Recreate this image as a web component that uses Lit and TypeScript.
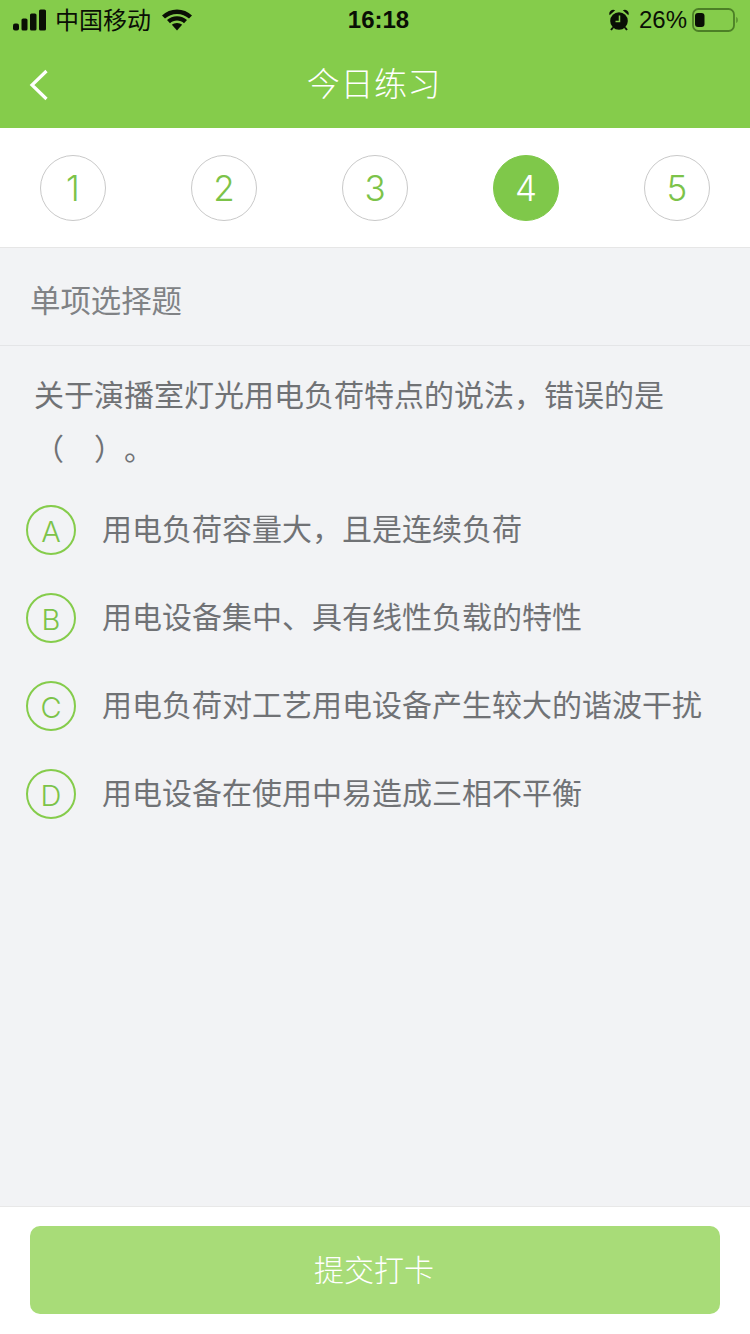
import {LitElement, html, css} from 'lit';
import {customElement} from 'lit/decorators.js';

const STEPS = ['1', '2', '3', '4', '5'];
const OPTIONS = [
  {key: 'A', text: '用电负荷容量大，且是连续负荷'},
  {key: 'B', text: '用电设备集中、具有线性负载的特性'},
  {key: 'C', text: '用电负荷对工艺用电设备产生较大的谐波干扰'},
  {key: 'D', text: '用电设备在使用中易造成三相不平衡'},
];

@customElement('app-root')
export class AppRoot extends LitElement {
  static styles = css`
    :host {
      display: flex;
      flex-direction: column;
      width: 750px;
      height: 1334px;
      overflow: hidden;
      background: #f2f3f5;
      font-family: "Liberation Sans", "Noto Sans CJK SC", sans-serif;
    }
    .top {
      background: #85cc4b;
      height: 128px;
      display: flex;
      flex-direction: column;
    }
    .status {
      height: 40px;
      display: grid;
      grid-template-columns: 1fr auto 1fr;
      align-items: center;
      color: #0a0f05;
      font-size: 24px;
    }
    .status-left {
      display: flex;
      align-items: center;
      padding-left: 13px;
    }
    .carrier {
      margin-left: 9px;
      margin-right: 11px;
      padding-bottom: 4px;
    }
    .time {
      font-weight: 700;
      font-size: 24px;
      padding-left: 7px;
    }
    .status-right {
      display: flex;
      align-items: center;
      justify-content: flex-end;
      padding-right: 12px;
    }
    .pct {
      margin-left: 10px;
      margin-right: 5px;
    }
    .nav {
      flex: 1;
      position: relative;
      display: flex;
      align-items: center;
      justify-content: center;
      color: #fff;
      font-size: 33px;
      font-weight: 300;
      letter-spacing: 0.6px;
      padding: 0 2px 4px 0;
    }
    .back {
      position: absolute;
      left: 29px;
      top: 29px;
    }
    .steps {
      height: 119px;
      background: #fff;
      border-bottom: 1px solid #e6e6e6;
      display: flex;
      justify-content: space-between;
      align-items: center;
      padding: 0 40px;
    }
    .step {
      width: 66px;
      height: 66px;
      box-sizing: border-box;
      border: 1px solid #c9c9c9;
      border-radius: 50%;
      display: flex;
      align-items: center;
      justify-content: center;
      color: #7cc349;
      font-family: Inter, sans-serif;
      font-size: 35px;
      font-weight: 300;
    }
    .step.on {
      background: #7fc84a;
      border-color: #7fc84a;
      color: #fff;
    }
    .kind {
      height: 98px;
      box-sizing: border-box;
      border-bottom: 1px solid #e4e5e7;
      padding: 4px 30px 0;
      display: flex;
      align-items: center;
      font-size: 30.4px;
      color: #808285;
    }
    .body {
      flex: 1;
      padding: 23px 30px 0 26px;
    }
    .question {
      margin: 0 0 9px 8px;
      font-size: 30px;
      line-height: 54px;
      color: #707275;
      text-spacing-trim: space-all;
    }
    .option {
      height: 88px;
      display: flex;
      align-items: center;
      color: #707275;
      font-size: 30px;
    }
    .option span {
      padding-bottom: 6px;
    }
    .badge {
      width: 50px;
      height: 50px;
      box-sizing: border-box;
      border: 2px solid #85cc4b;
      border-radius: 50%;
      margin-right: 26px;
      display: flex;
      align-items: center;
      justify-content: center;
      color: #7cc349;
      font-family: Inter, sans-serif;
      font-weight: 300;
      font-size: 29px;
      padding-top: 2px;
      flex: none;
    }
    .footer {
      height: 128px;
      box-sizing: border-box;
      background: #fff;
      border-top: 1px solid #e8e8e8;
      padding: 19px 30px 0;
    }
    .submit {
      height: 88px;
      border-radius: 10px;
      background: #a8dc78;
      color: #fff;
      font-size: 30px;
      font-weight: 300;
      padding: 0 2px 4px 0;
      box-sizing: border-box;
      display: flex;
      align-items: center;
      justify-content: center;
    }
  `;

  renderSignal() {
    return html`<svg width="33" height="22" viewBox="0 0 33 22" fill="currentColor">
      <rect x="0" y="14.5" width="6" height="7" rx="2"></rect>
      <rect x="8.5" y="9.5" width="6" height="12" rx="1.6"></rect>
      <rect x="17" y="4.5" width="6.5" height="17" rx="1.6"></rect>
      <rect x="26" y="0.5" width="7" height="21" rx="1.6"></rect>
    </svg>`;
  }

  renderWifi() {
    return html`<svg width="30" height="22" viewBox="0 0 30 22" fill="currentColor">
      <path d="M15 0.5C9.2 0.5 4 2.7 0 6.4L3 9.6C6.2 6.6 10.4 4.9 15 4.9S23.8 6.6 27 9.6L30 6.4C26 2.7 20.8 0.5 15 0.5Z"></path>
      <path d="M15 7.2C11.1 7.2 7.6 8.6 5 11.1L8 14.3C9.8 12.6 12.3 11.6 15 11.6S20.2 12.6 22 14.3L25 11.1C22.4 8.6 18.9 7.2 15 7.2Z"></path>
      <path d="M15 13.9C13 13.9 11.2 14.6 9.9 15.8L15 21.5L20.1 15.8C18.8 14.6 17 13.9 15 13.9Z"></path>
    </svg>`;
  }

  renderAlarm() {
    return html`<svg width="20" height="22" viewBox="0 0 20 22">
      <circle cx="10" cy="12" r="8.8" fill="currentColor"></circle>
      <path d="M0.6 6.2A4 4 0 0 1 6.2 1.2ZM19.4 6.2A4 4 0 0 0 13.8 1.2Z" fill="currentColor"></path>
      <path d="M4 18.5L2 21M16 18.5L18 21" stroke="currentColor" stroke-width="2"></path>
      <path d="M10.5 6.5V12.5H6.5" fill="none" stroke="#85cc4b" stroke-width="1.5"></path>
    </svg>`;
  }

  renderBattery() {
    return html`<svg width="46" height="24" viewBox="0 0 46 24">
      <rect x="1" y="1" width="41" height="22" rx="5.5" fill="none" stroke="#4c7f26" stroke-width="1.8"></rect>
      <rect x="3" y="5" width="9.5" height="14" rx="3" fill="currentColor"></rect>
      <path d="M44.4 9C45.4 9.6 45.6 10.6 45.6 12S45.4 14.4 44.4 15Z" fill="#4c7f26"></path>
    </svg>`;
  }

  render() {
    return html`
      <div class="top">
        <div class="status">
          <div class="status-left">
            ${this.renderSignal()}
            <span class="carrier">中国移动</span>
            ${this.renderWifi()}
          </div>
          <div class="time">16:18</div>
          <div class="status-right">
            ${this.renderAlarm()}
            <span class="pct">26%</span>
            ${this.renderBattery()}
          </div>
        </div>
        <div class="nav">
          <svg class="back" width="20" height="32" viewBox="0 0 20 32" fill="none" stroke="#fff" stroke-width="3.2">
            <path d="M17.5 2L3 16L17.5 30"></path>
          </svg>
          今日练习
        </div>
      </div>
      <div class="steps">
        ${STEPS.map(s => html`<div class="step ${s === '4' ? 'on' : ''}">${s}</div>`)}
      </div>
      <div class="kind">单项选择题</div>
      <div class="body">
        <p class="question">关于演播室灯光用电负荷特点的说法，错误的是（　）。</p>
        ${OPTIONS.map(o => html`
          <div class="option">
            <div class="badge">${o.key}</div>
            <span>${o.text}</span>
          </div>
        `)}
      </div>
      <div class="footer">
        <div class="submit">提交打卡</div>
      </div>
    `;
  }
}
